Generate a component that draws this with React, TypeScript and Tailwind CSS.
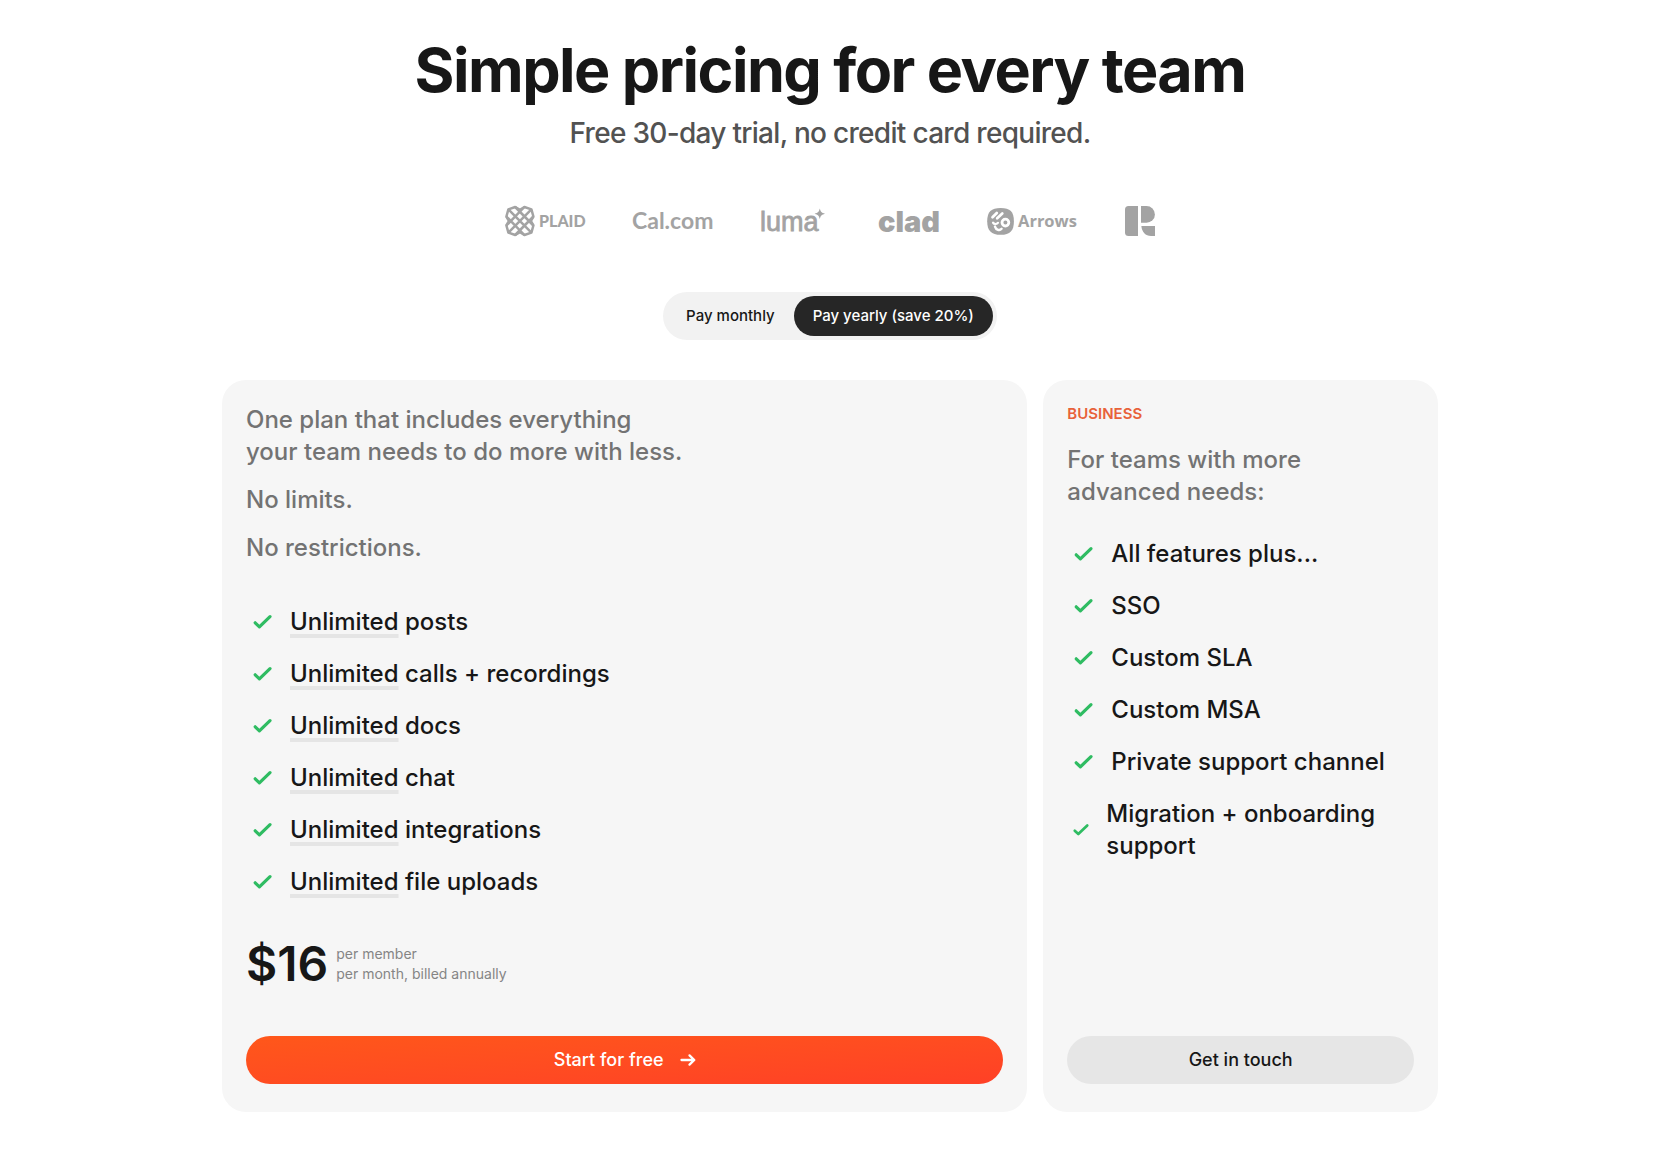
import { useState } from "react";

const PLAN_FEATURES = ["posts", "calls + recordings", "docs", "chat", "integrations", "file uploads"];

const BUSINESS_FEATURES = [
  "All features plus...",
  "SSO",
  "Custom SLA",
  "Custom MSA",
  "Private support channel",
  "Migration + onboarding support",
];

function CheckIcon() {
  return (
    <svg className="h-8 w-8" viewBox="0 0 32 32" fill="none" aria-hidden="true">
      <path d="M9.2 16.8L13.4 20.8L24 10.6" stroke="#2fbc62" strokeWidth="3.2" strokeLinecap="round" strokeLinejoin="round" />
    </svg>
  );
}

function ArrowIcon() {
  return (
    <svg className="h-4 w-4" viewBox="0 0 16 16" fill="none" aria-hidden="true">
      <path d="M1.5 8H14M9.5 3.4L14.3 8L9.5 12.6" stroke="currentColor" strokeWidth="2.3" strokeLinecap="round" strokeLinejoin="round" />
    </svg>
  );
}

function Logos() {
  return (
    <ul className="flex flex-wrap items-center justify-center gap-12 text-[#a3a3a3]">
      <li>
        <svg className="h-8 w-20 overflow-visible" viewBox="0 0 80 32" fill="currentColor">
          <g fill="none" stroke="currentColor" strokeWidth="2.5" strokeLinejoin="round">
            <path d="M3.4 4.4L10.2 2L15 4.8L19.4 2L26.4 4.4L28.4 11.5L25.8 16L28.4 20.5L26.4 27.6L19.4 30L15 27.2L10.2 30L3.4 27.6L1.4 20.5L4 16L1.4 11.5Z" />
            <path d="M3.4 4.4L26.4 27.6M26.4 4.4L3.4 27.6M10.2 2L28.4 20.5M19.4 2L1.4 20.5M1.4 11.5L19.4 30M28.4 11.5L10.2 30" />
          </g>
          <text x="34" y="21.5" fontSize="16" fontWeight="900" fontFamily="Lato, sans-serif">PLAID</text>
        </svg>
      </li>
      <li>
        <svg className="h-8 w-20 overflow-visible" viewBox="0 0 80 32" fill="currentColor">
          <text x="-1" y="23.5" fontSize="23" fontWeight="700" fontFamily="Lato, sans-serif">Cal.com</text>
        </svg>
      </li>
      <li>
        <svg className="h-8 w-[69px] overflow-visible" viewBox="0 0 69 32" fill="currentColor">
          <text x="-1" y="26" fontSize="27" stroke="currentColor" strokeWidth="0.8" fontFamily="'Liberation Sans', sans-serif">luma</text>
          <path d="M58.8 3.6C59.9 7.2 60.3 7.6 64 8.8C60.3 10 59.9 10.4 58.8 14C57.7 10.4 57.3 10 53.6 8.8C57.3 7.6 57.7 7.2 58.8 3.6Z" />
        </svg>
      </li>
      <li>
        <svg className="h-8 w-[61px] overflow-visible" viewBox="0 0 61 32" fill="currentColor">
          <text x="0" y="26.5" fontSize="29" fontWeight="900" fontFamily="Inter, sans-serif">clad</text>
        </svg>
      </li>
      <li>
        <svg className="h-8 w-[90px] overflow-visible" viewBox="0 0 90 32" fill="currentColor">
          <path d="M13.7 3C23.2 3 26.9 6.7 26.9 16.2S23.2 29.8 13.7 29.8S0.2 25.7 0.2 16.2S4.2 3 13.7 3Z" />
          <g fill="none" stroke="white" strokeLinecap="round">
            <path d="M5.5 12.3L9.8 8M10.2 13.2L15.3 8.4" strokeWidth="2.7" />
            <path d="M6 17.6C7 19.4 9.4 19.4 11 17.8" strokeWidth="2.2" />
            <path d="M8 21.6C9 25 12.6 26 14.6 23.8" strokeWidth="2.4" />
            <circle cx="18.4" cy="17.6" r="3.4" strokeWidth="2.8" />
          </g>
          <text x="31" y="22" fontSize="16.5" fontWeight="700" fontFamily="'Open Sans', sans-serif">Arrows</text>
        </svg>
      </li>
      <li>
        <svg className="h-8 w-[30px]" viewBox="0 0 30 32" fill="currentColor" aria-hidden="true">
          <path d="M3.5 1H13V31H3.5Q0 31 0 27.5V4.5Q0 1 3.5 1Z" />
          <path d="M16 1H21.5A8.3 8.3 0 0 1 21.5 17.8H16Z" />
          <path d="M16.4 21H30V31H26C20.5 31 16.8 27 16.4 21Z" />
        </svg>
      </li>
    </ul>
  );
}

export default function App() {
  const [yearly, setYearly] = useState(true);

  const tab = "h-10 rounded-full px-[19px] text-[15px] font-medium";
  const tabOn = "bg-[#262626] text-white";
  const tabOff = "text-neutral-900";
  const card = "flex flex-col rounded-3xl bg-[#f6f6f6] px-6 pt-6 pb-7";

  return (
    <main className="min-h-screen bg-white px-6 pt-8 pb-12 font-[Inter,sans-serif] text-neutral-900 antialiased">
      <div className="mx-auto flex max-w-[1216px] flex-col">
        <h1 className="text-center text-[61px] leading-[76px] font-bold tracking-tight">
          Simple pricing for every team
        </h1>
        <p className="mt-[5px] text-center text-[28px] leading-10 font-medium tracking-tight text-neutral-600">
          Free 30-day trial, no credit card required.
        </p>

        <div className="mt-13">
          <Logos />
        </div>

        <div className="mt-[55px] flex items-center self-center rounded-full bg-[#f2f2f2] p-1">
          <button className={`${tab} ${yearly ? tabOff : tabOn}`} aria-pressed={!yearly} onClick={() => setYearly(false)}>
            Pay monthly
          </button>
          <button className={`${tab} ${yearly ? tabOn : tabOff}`} aria-pressed={yearly} onClick={() => setYearly(true)}>
            Pay yearly (save 20%)
          </button>
        </div>

        <div className="mt-10 grid grid-cols-1 gap-4 lg:grid-cols-3">
          <section className={`${card} lg:col-span-2`}>
            <div className="flex flex-col gap-4 text-2xl leading-8 font-medium text-[#737373]">
              <p>
                One plan that includes everything
                <br />
                your team needs to do more with less.
              </p>
              <p>No limits.</p>
              <p>No restrictions.</p>
            </div>

            <ul className="mt-8 text-2xl leading-8 font-medium">
              {PLAN_FEATURES.map((name) => (
                <li key={name} className="flex items-center gap-3 py-2.5">
                  <CheckIcon />
                  <span>
                    <span className="underline decoration-[#e5e5e5] decoration-4 underline-offset-4">Unlimited</span> {name}
                  </span>
                </li>
              ))}
            </ul>

            <div className="mt-7 mb-11 flex items-center gap-2">
              <span className="text-5xl leading-[56px] font-semibold">$16</span>
              <p className="text-sm leading-5 text-[#858585]">
                per member
                <br />
                per month, billed annually
              </p>
            </div>

            <button className="mt-auto flex h-12 items-center justify-center gap-4 rounded-full bg-linear-to-br from-[#ff571a] to-[#ff4026] text-lg font-medium text-white">
              Start for free
              <ArrowIcon />
            </button>
          </section>

          <section className={card}>
            <h2 className="text-[15px] leading-5 font-semibold text-[#e8623a]">BUSINESS</h2>
            <p className="mt-5 text-2xl leading-8 font-medium text-[#737373]">
              For teams with more
              <br />
              advanced needs:
            </p>

            <ul className="mt-5 text-2xl leading-8 font-medium">
              {BUSINESS_FEATURES.map((name) => (
                <li key={name} className="flex items-center gap-3 py-2.5">
                  <CheckIcon />
                  <span>{name}</span>
                </li>
              ))}
            </ul>

            <button className="mt-auto h-12 rounded-full bg-[#e6e6e6] text-lg font-medium">Get in touch</button>
          </section>
        </div>
      </div>
    </main>
  );
}
